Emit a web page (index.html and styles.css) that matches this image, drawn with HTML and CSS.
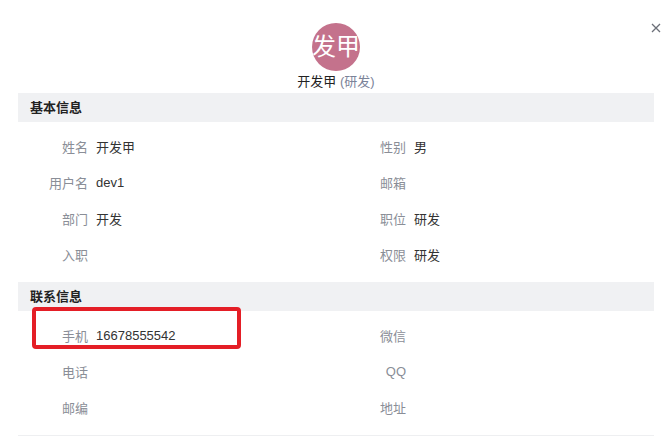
FILE: index.html
```html
<!DOCTYPE html>
<html lang="zh-CN">

<head>
  <meta charset="UTF-8">
  <meta name="viewport" content="width=device-width, initial-scale=1.0">
  <title>用户信息</title>
  <link rel="stylesheet" href="styles.css">
</head>

<body>
  <div class="dialog">
    <!-- 关闭按钮 -->
    <button class="close-btn" aria-label="关闭">
      <svg width="10" height="10" viewBox="0 0 10 10">
        <path d="M1 1 L9 9 M9 1 L1 9" stroke="#6b6f78" stroke-width="1.3" fill="none" />
      </svg>
    </button>

    <!-- 头像和名字 -->
    <div class="profile-head">
      <div class="avatar">发甲</div>
      <div class="profile-name">开发甲 <span class="profile-dept">(研发)</span></div>
    </div>

    <!-- 基本信息 -->
    <section class="info-section">
      <div class="section-title">基本信息</div>
      <div class="info-grid">
        <div class="info-item"><span class="info-label">姓名</span><span class="info-value">开发甲</span></div>
        <div class="info-item"><span class="info-label">性别</span><span class="info-value">男</span></div>
        <div class="info-item"><span class="info-label">用户名</span><span class="info-value">dev1</span></div>
        <div class="info-item"><span class="info-label">邮箱</span><span class="info-value"></span></div>
        <div class="info-item"><span class="info-label">部门</span><span class="info-value">开发</span></div>
        <div class="info-item"><span class="info-label">职位</span><span class="info-value">研发</span></div>
        <div class="info-item"><span class="info-label">入职</span><span class="info-value"></span></div>
        <div class="info-item"><span class="info-label">权限</span><span class="info-value">研发</span></div>
      </div>
    </section>

    <!-- 联系信息 -->
    <section class="info-section contact-section">
      <div class="section-title">联系信息</div>
      <div class="info-grid">
        <div class="info-item"><span class="info-label">手机</span><span class="info-value">16678555542</span></div>
        <div class="info-item"><span class="info-label">微信</span><span class="info-value"></span></div>
        <div class="info-item"><span class="info-label">电话</span><span class="info-value"></span></div>
        <div class="info-item"><span class="info-label">QQ</span><span class="info-value"></span></div>
        <div class="info-item"><span class="info-label">邮编</span><span class="info-value"></span></div>
        <div class="info-item"><span class="info-label">地址</span><span class="info-value"></span></div>
      </div>
      <!-- 红框标注 -->
      <div class="highlight-box"></div>
    </section>
  </div>
</body>

</html>
```

FILE: styles.css
```css
/* 通用样式 */
body {
  margin: 0;
  padding: 0;
  background: #fff;
  font-family: "Liberation Sans", "Noto Sans CJK SC", sans-serif;
  font-size: 13px;
  color: #333;
  overflow: hidden;
}

.dialog {
  position: relative;
  padding: 0 7px 0 18px;
}

/* 关闭按钮 */
.close-btn {
  position: absolute;
  top: 23px;
  right: 0;
  width: 10px;
  height: 10px;
  padding: 0;
  border: none;
  background: none;
  cursor: pointer;
  display: flex;
}

/* 头像区域 */
.profile-head {
  padding-top: 23px;
  text-align: center;
}

.avatar {
  width: 48px;
  height: 48px;
  margin: 0 auto;
  border-radius: 50%;
  background: #c4728c;
  color: #fff;
  font-size: 24px;
  line-height: 48px;
  white-space: nowrap;
  overflow: hidden;
  display: flex;
  justify-content: center;
}

.profile-name {
  height: 22px;
  line-height: 22px;
  color: #222;
}

.profile-dept {
  color: #7b8399;
}

/* 信息分组 */
.info-section {
  position: relative;
}

.section-title {
  height: 29px;
  line-height: 29px;
  padding-left: 12px;
  background: #f0f1f3;
  font-weight: bold;
  color: #222;
}

.info-grid {
  display: grid;
  grid-template-columns: 1fr 1fr;
  padding: 6px 0 10px;
}

.info-item {
  display: flex;
  align-items: center;
  height: 36px;
}

.info-label {
  width: 78px;
  padding-right: 8px;
  box-sizing: border-box;
  text-align: right;
  color: #8a8e97;
}

.info-value {
  color: #333;
}

.contact-section {
  border-bottom: 1px solid #eeeff1;
}

/* 红框标注 */
.highlight-box {
  position: absolute;
  left: 14px;
  top: 25px;
  width: 209px;
  height: 42px;
  box-sizing: border-box;
  border: 4px solid #e41e26;
  border-radius: 4px;
}
```
